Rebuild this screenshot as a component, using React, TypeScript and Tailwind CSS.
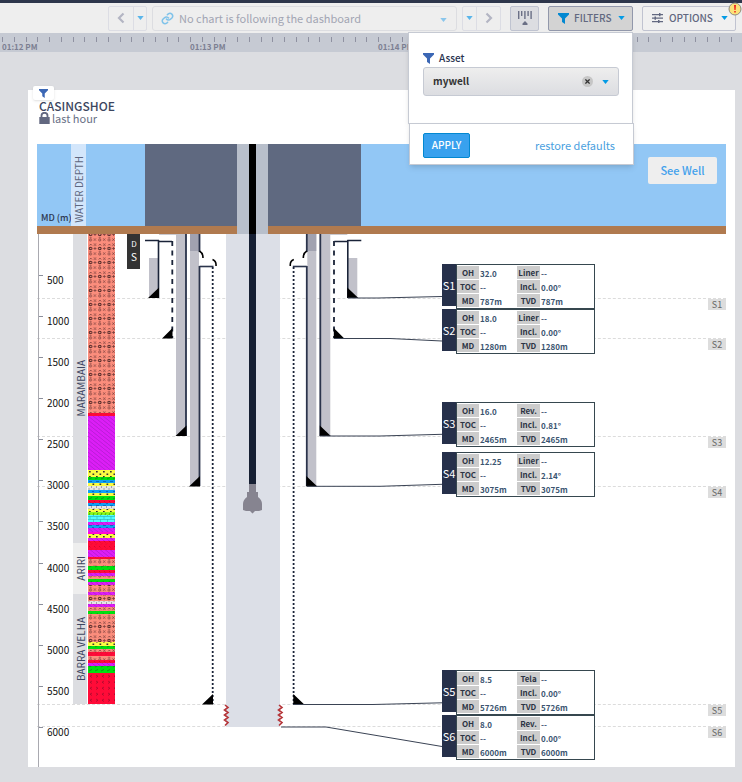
import React from "react";

type Layer = [kind: string, top: number, bottom: number];

const LAYERS: Layer[] = [
  ["salmon", 234, 413], ["red", 413, 416], ["magenta", 416, 470], ["yellow", 470, 477],
  ["green", 477, 480], ["blue", 480, 483], ["yellow", 483, 486], ["grey", 486, 490],
  ["blue", 490, 493], ["yellow", 493, 496], ["green", 496, 500], ["red", 500, 503],
  ["blue", 503, 506], ["grey", 506, 509], ["yellow", 509, 512], ["lime", 512, 515],
  ["cyan", 515, 522], ["magenta", 522, 525], ["blue", 525, 528], ["magenta", 528, 532],
  ["pink", 532, 534], ["yellow", 534, 538], ["magenta", 538, 541], ["red", 541, 550],
  ["magenta", 550, 557], ["red", 557, 559], ["salmon", 559, 566], ["green", 566, 570],
  ["red", 570, 573], ["magenta", 573, 576], ["salmon", 576, 579], ["green", 579, 582],
  ["magenta", 582, 585], ["salmon", 585, 592], ["magenta", 592, 595], ["salmon", 595, 601],
  ["grey", 601, 604], ["magenta", 604, 607], ["salmon", 607, 611], ["green", 611, 614],
  ["salmon", 614, 642], ["yellow", 642, 646], ["green", 646, 649], ["salmon", 649, 652],
  ["red", 652, 656], ["salmon", 656, 660], ["red", 660, 663], ["magenta", 663, 666],
  ["green", 666, 673], ["redV", 673, 704],
];

const DEPTHS = [500, 1000, 1500, 2000, 2500, 3000, 3500, 4000, 4500, 5000, 5500, 6000];

const GUIDES = [
  { id: "S1", place: "top-[64px]" },
  { id: "S2", place: "top-[104px]" },
  { id: "S3", place: "top-[202px]" },
  { id: "S4", place: "top-[252px]" },
  { id: "S5", place: "top-[470px]" },
  { id: "S6", place: "top-[492px]" },
];

const SHOES = [
  { id: "S1", gap: "mt-[30px]", oh: "32.0", kind: "Liner", incl: "0.00°", md: "787m" },
  { id: "S2", gap: "", oh: "18.0", kind: "Liner", incl: "0.00°", md: "1280m" },
  { id: "S3", gap: "mt-12", oh: "16.0", kind: "Rev.", incl: "0.81°", md: "2465m" },
  { id: "S4", gap: "mt-[5px]", oh: "12.25", kind: "Liner", incl: "2.14°", md: "3075m" },
  { id: "S5", gap: "mt-[173px]", oh: "8.5", kind: "Tela", incl: "0.00°", md: "5726m" },
  { id: "S6", gap: "", oh: "8.0", kind: "Rev.", incl: "0.00°", md: "6000m" },
];

function Caret({ className = "" }: { className?: string }) {
  return (
    <svg viewBox="0 0 8 5" className={`h-[4px] w-[7px] shrink-0 ${className}`} aria-hidden="true">
      <path d="M0 0h8L4 5z" fill="currentColor" />
    </svg>
  );
}

function Funnel({ className = "h-[11px] w-[11px]" }: { className?: string }) {
  return (
    <svg viewBox="0 0 11 11" className={`shrink-0 ${className}`} aria-hidden="true">
      <path d="M0 0h11v1.400L7 5.600V11L4 8.900V5.600L0 1.400z" fill="currentColor" />
    </svg>
  );
}

function Chevron({ flip = false }: { flip?: boolean }) {
  return (
    <svg viewBox="0 0 8 12" className={`h-3 w-2 ${flip ? "rotate-180" : ""}`} aria-hidden="true">
      <path d="M6.500 1.500 2 6l4.500 4.500" fill="none" stroke="currentColor" strokeWidth="2.200" />
    </svg>
  );
}

function FilterPopup() {
  return (
    <div className="absolute top-full right-0 z-20 mt-px w-[225px] text-left">
      <div className="h-[92px] border border-[#c6cad3] bg-white pt-[17px] pr-[13px] pl-[14px] shadow-md">
        <label htmlFor="asset" className="flex h-[17px] items-center gap-[5px] text-[10px] font-medium text-[#2a3350]">
          <Funnel className="size-[11px] text-[#3b67b5]" />
          Asset
        </label>
        <div className="relative">
          <select
            id="asset"
            className="h-[29px] w-full appearance-none rounded-[3px] border border-[#c6cad3] bg-linear-to-b from-[#eeeeee] to-[#dcdde1] pl-[9px] text-[10px] leading-4 font-bold text-[#333333]"
          >
            <option>mywell</option>
          </select>
          <button
            type="button"
            aria-label="Clear asset"
            className="absolute top-[9px] right-[26px] flex size-[11px] items-center justify-center rounded-full bg-[#c6c6c6] text-[#333]"
          >
            <svg viewBox="0 0 6 6" className="size-[5px]" aria-hidden="true">
              <path d="m.5.5 5 5m0-5-5 5" stroke="currentColor" strokeWidth="1.500" />
            </svg>
          </button>
          <Caret className="pointer-events-none absolute top-[13px] right-[10px] text-[#039be5]" />
        </div>
      </div>
      <div className="relative left-px -mt-px flex h-[42px] items-center justify-between border border-[#c6cad3] bg-white pt-[3px] pr-[18px] pl-[13px] shadow-md">
        <button type="button" className="h-[25px] w-[47px] rounded-[2px] border border-[#0288d1] bg-[#38a1ee] text-[10px] font-medium text-white">
          APPLY
        </button>
        <a href="#defaults" className="text-[11px] text-[#4a9fe0]">restore defaults</a>
      </div>
    </div>
  );
}

function Toolbar() {
  return (
    <header className="flex h-[33px] items-center border-t-[3px] border-[#2d364b] bg-[#eeeeee] pr-[6px] pl-[108px]">
      <div className="flex h-[25px] w-[39px] rounded-[2px] border border-[#dcdde4] text-[#b3b5c3]">
        <button type="button" aria-label="Previous" className="flex flex-1 items-center justify-center">
          <Chevron />
        </button>
        <button type="button" aria-label="Previous options" className="flex w-[13px] items-center justify-center border-l border-[#dcdde4]">
          <Caret className="text-[#5ab5ea]" />
        </button>
      </div>
      <div className="relative ml-[5px] min-w-0 flex-1">
        <svg viewBox="0 0 24 24" className="pointer-events-none absolute top-[6px] left-[9px] size-[13px]" fill="none" stroke="#80c3ea" strokeWidth="2.800" strokeLinecap="round" aria-hidden="true">
          <path d="M10 13a5 5 0 0 0 7.500.5l3-3a5 5 0 0 0-7-7l-1.800 1.700" />
          <path d="M14 11a5 5 0 0 0-7.500-.5l-3 3a5 5 0 0 0 7 7l1.800-1.700" />
        </svg>
        <select
          aria-label="Followed chart"
          className="block h-[25px] w-full appearance-none rounded-[3px] border border-[#dcdde1] pr-6 pl-[26px] text-[11px] leading-4 text-[#a2a5b3]"
        >
          <option>No chart is following the dashboard</option>
        </select>
        <Caret className="pointer-events-none absolute top-3 right-[10px] text-[#8ac6ec]" />
      </div>
      <div className="ml-[5px] flex h-[25px] w-[39px] rounded-[2px] border border-[#dcdde4] text-[#b3b5c3]">
        <button type="button" aria-label="Next options" className="flex w-[14px] items-center justify-center border-r border-[#dcdde4]">
          <Caret className="text-[#5ab5ea]" />
        </button>
        <button type="button" aria-label="Next" className="flex flex-1 items-center justify-center">
          <Chevron flip />
        </button>
      </div>
      <button type="button" aria-label="Timeline" className="ml-[9px] flex h-[25px] w-[29px] items-center justify-center rounded-[2px] border border-[#bfc3d0] bg-[#dcdde1] text-[#6b7086]">
        <svg viewBox="0 0 14 14" className="size-[14px]" fill="currentColor" aria-hidden="true">
          <path d="M0 0h1.400v8H0zM3 0h1.400v5H3zM6.200 0h1.400v8H6.200zM9.400 0h1.400v5H9.400zM12.400 0h1.400v8h-1.400zM7 10l2.500 2.500V14h-5v-1.500z" />
        </svg>
      </button>
      <div className="relative ml-[9px]">
        <button type="button" aria-expanded="true" className="flex h-[25px] w-[85px] items-center rounded-[2px] border border-[#9298ab] bg-[#d3d3d3] pl-[9px] text-[10px] font-medium text-[#626880]">
          <Funnel className="mr-[5px] size-[11px] text-[#0288d1]" />
          FILTERS
          <Caret className="mr-[7px] ml-auto text-[#039be5]" />
        </button>
        <FilterPopup />
      </div>
      <div className="relative ml-[9px]">
        <button type="button" className="flex h-[25px] w-[94px] items-center rounded-[2px] border border-[#c0c3d0] bg-[#f0f0f0] pl-[9px] text-[10px] font-medium text-[#626880]">
          <svg viewBox="0 0 11 10" className="mr-[6px] h-[10px] w-[11px]" fill="currentColor" aria-hidden="true">
            <path d="M0 1h11v1.200H0zM0 4.500h11v1.200H0zM0 8h11v1.200H0zM7 0h1.500v3.200H7zM2.500 3.500H4v3.200H2.500zM6 7h1.500v3.200H6z" />
          </svg>
          OPTIONS
          <Caret className="mr-[7px] ml-auto text-[#039be5]" />
        </button>
        <svg viewBox="0 0 14 14" className="absolute -top-[4px] -right-[6px] size-[14px]" role="img" aria-label="Warning">
          <circle cx="7" cy="7" r="6" fill="#fbe27a" stroke="#8e8a80" />
          <path d="M6 3h2l-.4 5H6.400zM6.200 9h1.600v1.600H6.200z" fill="#f0281e" />
        </svg>
      </div>
    </header>
  );
}

function Ruler() {
  return (
    <div className="flex h-[19px] overflow-x-clip bg-[#c6cad3] pt-1 pl-[2px]">
      {["01:12 PM", "01:13 PM", "01:14 PM", "01:15 PM"].map((time) => (
        <div key={time} className="w-[188px] shrink-0">
          <div className="flex h-[5px]">
            {Array.from({ length: 16 }, (_, i) => (
              <span key={i} className="flex-1 border-l border-[#8f91a1]" />
            ))}
          </div>
          <div className="text-[8px] leading-[9px] font-bold text-[#7c7f92]">{time}</div>
        </div>
      ))}
    </div>
  );
}

function WaterBand() {
  return (
    <div className="flex h-[90px] bg-[linear-gradient(#92c7f5_82px,#b07a4f_82px)]">
      <div className="flex h-[82px] w-[34px] shrink-0 items-end pb-[2px] pl-1 text-[9px] leading-[13px] font-medium whitespace-nowrap text-[#2c3650]">
        MD (m)
      </div>
      <div className="flex h-[82px] w-[15px] shrink-0 items-center justify-center bg-[#d3e6fb] pt-2">
        <span className="rotate-180 text-[10px] leading-[15px] whitespace-nowrap text-[#5d6780] [writing-mode:vertical-rl]">WATER DEPTH</span>
      </div>
      <div className="ml-[59px] w-[216px] shrink-0 bg-[linear-gradient(#5f6980_82px,#b07a4f_82px)] pl-[92px]">
        <div className="h-full w-[31px] bg-[#b8bfcb] pl-3">
          <div className="h-full w-[7px] bg-black" />
        </div>
      </div>
      <button type="button" className="mt-[13px] mr-[9px] ml-auto h-[27px] w-[69px] rounded-[2px] bg-[#eeeeee] text-[11px] font-medium text-[#42a1ec]">
        See Well
      </button>
    </div>
  );
}

function DepthAxis() {
  return (
    <ol className="ml-px flex h-full w-[35px] shrink-0 flex-col justify-between border-l border-[#a9a9b0] pt-[38px] pb-[27px]">
      {DEPTHS.map((depth) => (
        <li key={depth} className="flex h-4 items-start">
          <span className="mt-[3px] w-[4px] shrink-0 border-t border-[#8b8f9c]" />
          <span className="ml-1 text-[10px] leading-4 text-[#111]">{depth}</span>
        </li>
      ))}
    </ol>
  );
}

function Formations() {
  const label = "rotate-180 text-[10px] leading-[12px] whitespace-nowrap text-[#3c4660] [writing-mode:vertical-rl]";
  return (
    <div className="w-[14px] shrink-0">
      <div className="flex h-[309px] items-center justify-end bg-[#dcdde1]"><span className={label}>MARAMBAIA</span></div>
      <div className="flex h-[51px] items-center justify-end bg-[#eeeeee]"><span className={label}>ARIRI</span></div>
      <div className="flex h-[110px] items-center justify-end bg-[#dcdde1]"><span className={label}>BARRA VELHA</span></div>
    </div>
  );
}

function Lithology() {
  return (
    <svg viewBox="0 234 27 470" className="ml-px h-[470px] w-[27px] shrink-0" aria-label="Lithology column" role="img">
      <defs>
        <pattern id="salmon" width="9.300" height="14" patternUnits="userSpaceOnUse" y="4">
          <path d="M0 0h9.300v14H0z" fill="#fb8d7c" />
          <circle cx="2.500" cy="6.500" r="1.300" fill="none" stroke="#4a2625" />
          <circle cx="2.500" cy="12" r="1.100" fill="none" stroke="#7c403c" strokeWidth=".8" />
          <path d="m1.500 3.500 1.200-1.500 1.200 1.500M5.500 6.500h3M7 5v3M5.800 1.500l2.400 2.400m0-2.400L5.800 3.900M5.800 10.500l2.200 2.200m0-2.200-2.200 2.200M1.500 9.800h2" fill="none" stroke="#7c403c" strokeWidth=".8" />
        </pattern>
        <pattern id="magenta" width="5" height="4" patternUnits="userSpaceOnUse">
          <path d="M0 0h5v4H0z" fill="#dc1ef6" />
          <path d="m0 0 5 4M-1-.8l1 .8M5 4l1 .8" stroke="#b61bd4" strokeWidth=".9" />
        </pattern>
        <pattern id="yellow" width="7" height="5" patternUnits="userSpaceOnUse">
          <path d="M0 0h7v5H0z" fill="#fbfb42" />
          <path d="M1 1h1.700v1.500H1zM4.500 3.500h1.700V5H4.500z" fill="#333" />
        </pattern>
        <pattern id="green" width="6" height="4" patternUnits="userSpaceOnUse">
          <path d="M0 0h6v4H0z" fill="#00e010" />
          <path d="m1 3 3-1.500" stroke="#079b12" />
        </pattern>
        <pattern id="blue" width="7" height="4" patternUnits="userSpaceOnUse">
          <path d="M0 0h7v4H0z" fill="#10a0f5" />
          <path d="M1 1.500h3M4 3.500h2" stroke="#0b69c4" />
        </pattern>
        <pattern id="grey" width="5" height="4" patternUnits="userSpaceOnUse">
          <path d="M0 0h5v4H0z" fill="#e4e4e4" />
          <path d="M1 0v2M3.500 2v2" stroke="#929292" strokeWidth=".8" />
        </pattern>
        <pattern id="lime" width="4" height="4" patternUnits="userSpaceOnUse">
          <path d="M0 0h4v4H0z" fill="#8df81c" />
          <path d="m1 3 1-2" stroke="#46a80c" />
        </pattern>
        <pattern id="cyan" width="7" height="6" patternUnits="userSpaceOnUse">
          <path d="M0 0h7v6H0z" fill="#4ffcff" />
          <path d="M0 .5h7M0 3.500h7M2 0v3M5.500 3v3" stroke="#2fb9bf" strokeWidth=".7" />
        </pattern>
        <pattern id="red" width="5" height="5" patternUnits="userSpaceOnUse">
          <path d="M0 0h5v5H0z" fill="#ff0b38" />
          <path d="m1 1 1.500 1.500M4 3.500 3 4.500" stroke="#c90629" strokeWidth=".8" />
        </pattern>
        <pattern id="redV" width="12" height="6" patternUnits="userSpaceOnUse" y="2">
          <path d="M0 0h12v6H0z" fill="#ff0b38" />
          <path d="M4 1 2 2.200l2 1.300M8 1l2 1.200-2 1.300" fill="none" stroke="#a80a2c" strokeWidth=".8" />
        </pattern>
        <pattern id="pink" width="4" height="4" patternUnits="userSpaceOnUse">
          <path d="M0 0h4v4H0z" fill="#ff08d8" />
        </pattern>
      </defs>
      {LAYERS.map(([kind, top, bottom]) => (
        <rect key={top} y={top} width="27" height={bottom - top} fill={`url(#${kind})`} />
      ))}
    </svg>
  );
}

function CasingSide() {
  return (
    <g>
      <path d="M149 258h9v40h-9z" fill="#c1c1ca" />
      <path d="M145 240.500h14M158.500 240v58M159 241.500h13" fill="none" stroke="#1a2338" strokeWidth="1.600" />
      <path d="M172.300 241v97" stroke="#1a2338" strokeWidth="1.800" strokeDasharray="5 4.500" />
      <path d="M159 234.500h19" stroke="#c9c9cf" />
      <path d="M176 234h10v202h-10zM190 234h9v252h-9z" fill="#c1c1ca" />
      <path d="M190 234h9v17h-9z" fill="#a1a2b0" />
      <path d="M186 234v202M199.500 234v18M199.500 266v220" stroke="#2b344c" strokeWidth="1.800" />
      <path d="M199.500 266.500h14" stroke="#2b344c" strokeWidth="1.600" />
      <path d="M199.500 251q3.500 2 3.500 7M212.500 259.500q4 1.500 3.500 6.500" fill="none" stroke="#000" strokeWidth="1.600" />
      <path d="M212.700 267v437" stroke="#1a2338" strokeWidth="1.800" strokeDasharray="2 2" />
      <path d="M159 287.500V298h-11zM172.500 328v10.500h-10.500zM186.500 425.500V436H175.500zM200 476v10.500h-11zM213 694v10.500h-11z" fill="#000" />
    </g>
  );
}

function WellSchematic() {
  return (
    <svg viewBox="115 234 327 533" className="h-[533px] w-[327px] shrink-0" role="img" aria-label="Casing schematic">
      <rect x="226" y="234" width="54" height="493" fill="#dcdfe7" />
      <rect x="249" y="234" width="7" height="250" fill="#161f33" />
      <path d="M249 484h7v8h2v5q4 3 4 7v6l-3 1-4 0-2.500 2.500L250 511h-4l-3-1v-6q0-4 4-7v-5h2z" fill="#868490" />
      <CasingSide />
      <g transform="translate(506.300 0) scale(-1 1)">
        <CasingSide />
      </g>
      <path
        d="m225 705 3 2.500-3.500 2.500 3.500 2.500-3.500 2.500 3.500 2.500-3.500 2.500 3.500 2.500-3 3M279 705l3 2.500-3.500 2.500 3.500 2.500-3.500 2.500 3.500 2.500-3.500 2.500 3.500 2.500-3 3"
        fill="none"
        stroke="#b5363a"
        strokeWidth="1.600"
      />
      <path
        d="M348 298h30l64-1.500M334 338.500h56l52 2.500M320 436h60l62-1.700M307 486.300h73l62-2M293 704.500h80l69-1.700M281 727h45l116 19.500"
        fill="none"
        stroke="#3a4354"
      />
      <rect x="127" y="234" width="13" height="35" fill="#333" />
      <g fill="#fff" textAnchor="middle">
        <text x="134" y="247" fontSize="8">D</text>
        <text x="134" y="261" fontSize="10">S</text>
      </g>
    </svg>
  );
}

function ShoeCard({ shoe }: { shoe: (typeof SHOES)[number] }) {
  const head = "border-b border-white bg-[#cccccc] p-0 text-center font-bold text-[#2c3444]";
  const cell = "p-0 pl-px font-bold text-[#3a5470]";
  return (
    <section className={`flex h-[45px] items-start ${shoe.gap}`}>
      <h2 className="flex h-[42px] w-[14px] items-center justify-center bg-[#26304a] text-[11px] leading-none text-white">{shoe.id}</h2>
      <div className="h-[45px] flex-1 border border-[#36474f] bg-white pt-px">
        <table className="w-full table-fixed border-separate border-spacing-0 text-[8px] leading-[13px]">
          <colgroup>
            <col className="w-[22px]" />
            <col className="w-[38px]" />
            <col className="w-[23px]" />
            <col />
          </colgroup>
          <tbody>
            <tr><th className={head}>OH</th><td className={cell}>{shoe.oh}</td><th className={head}>{shoe.kind}</th><td className={cell}>--</td></tr>
            <tr><th className={head}>TOC</th><td className={cell}>--</td><th className={head}>Incl.</th><td className={cell}>{shoe.incl}</td></tr>
            <tr><th className={head}>MD</th><td className={cell}>{shoe.md}</td><th className={head}>TVD</th><td className={cell}>{shoe.md}</td></tr>
          </tbody>
        </table>
      </div>
    </section>
  );
}

function WellChart() {
  return (
    <div className="relative isolate flex h-[533px]">
      {GUIDES.map(({ id, place }) => (
        <div key={id} className={`absolute inset-x-0 -z-10 flex justify-end border-t border-dashed border-[#dcdcdc] ${place}`}>
          <span className="h-[11px] w-[18px] bg-[#dddddd] text-center text-[9px] leading-[12px] text-[#666]">{id}</span>
        </div>
      ))}
      <DepthAxis />
      <Formations />
      <Lithology />
      <WellSchematic />
      <div className="w-[153px] shrink-0">
        {SHOES.map((shoe) => (
          <ShoeCard key={shoe.id} shoe={shoe} />
        ))}
      </div>
    </div>
  );
}

export default function App() {
  return (
    <div className="min-h-screen bg-[#dcdde1] font-['Noto_Sans_CJK_SC',sans-serif] leading-none">
      <Toolbar />
      <Ruler />
      <main className="pt-[38px] pr-[7px] pb-[15px] pl-7">
        <section className="relative bg-white pr-[9px] pl-[9px]">
          <button type="button" aria-label="Widget filters" className="absolute -top-1 left-[5px] flex h-[14px] w-[21px] items-center justify-center rounded-[2px] bg-white shadow">
            <Funnel className="size-[9px] text-[#3b67b5]" />
          </button>
          <div className="h-[54px] pt-[9px] pl-[2px]">
            <h1 className="text-xs leading-[13px] font-medium text-[#3c4660]">CASINGSHOE</h1>
            <p className="flex h-3 items-center gap-[2px] text-[11px] leading-3 text-[#6a7186]">
              <svg viewBox="0 0 11 12" className="h-[12px] w-[11px]" aria-hidden="true">
                <path d="M.3 5h10.400v7H.3z" fill="#626880" />
                <path d="M2.500 6V3.800a3 3 0 0 1 6 0V6" fill="none" stroke="#626880" strokeWidth="1.800" />
              </svg>
              last hour
            </p>
          </div>
          <WaterBand />
          <WellChart />
        </section>
      </main>
    </div>
  );
}
